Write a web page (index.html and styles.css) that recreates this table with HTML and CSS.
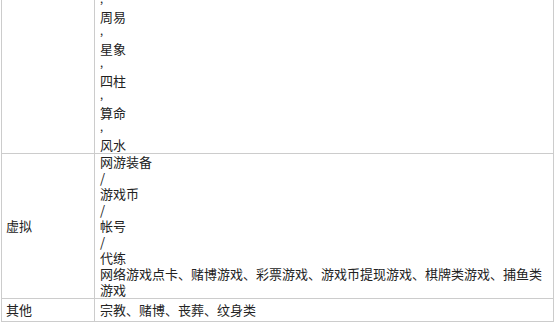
FILE: index.html
```html
<!DOCTYPE html>
<html lang="zh-CN">
<head>
<meta charset="utf-8">
<link rel="stylesheet" href="styles.css">
</head>
<body>
<table class="grid">
  <tr class="row-top">
    <td class="key"></td>
    <td class="val">
      <div class="line"><span class="sep">,</span></div>
      <div class="line">周易</div>
      <div class="line"><span class="sep">,</span></div>
      <div class="line">星象</div>
      <div class="line"><span class="sep">,</span></div>
      <div class="line">四柱</div>
      <div class="line"><span class="sep">,</span></div>
      <div class="line">算命</div>
      <div class="line"><span class="sep">,</span></div>
      <div class="line">风水</div>
    </td>
  </tr>
  <tr>
    <td class="key">虚拟</td>
    <td class="val">
      <div class="line">网游装备</div>
      <div class="line">/</div>
      <div class="line">游戏币</div>
      <div class="line">/</div>
      <div class="line">帐号</div>
      <div class="line">/</div>
      <div class="line">代练</div>
      <div class="line">网络游戏点卡、赌博游戏、彩票游戏、游戏币提现游戏、棋牌类游戏、捕鱼类游戏</div>
    </td>
  </tr>
  <tr class="row-pad">
    <td class="key">其他</td>
    <td class="val">宗教、赌博、丧葬、纹身类</td>
  </tr>
</table>
</body>
</html>
```
FILE: styles.css
```css
html, body {
  margin: 0;
  padding: 0;
  background: #fff;
}
body {
  padding-left: 1px;
  font-family: "Noto Sans CJK SC", "Noto Sans", sans-serif;
  font-size: 13px;
  line-height: 16px;
  color: #222;
}
.grid {
  border-collapse: collapse;
  width: 553px;
  margin-top: -8px;
}
.grid td {
  border: 1px solid #ccc;
  padding: 0;
  vertical-align: middle;
}
.grid .key {
  width: 84px;
  padding: 0 4px;
}
.grid .val {
  padding: 0 5px;
}
.grid .row-pad .key,
.grid .row-pad .val {
  padding-top: 3px;
  padding-bottom: 3px;
}
.line {
  display: block;
}
.sep {
  font-size: 11px;
  line-height: 0;
  vertical-align: 3px;
}
```
